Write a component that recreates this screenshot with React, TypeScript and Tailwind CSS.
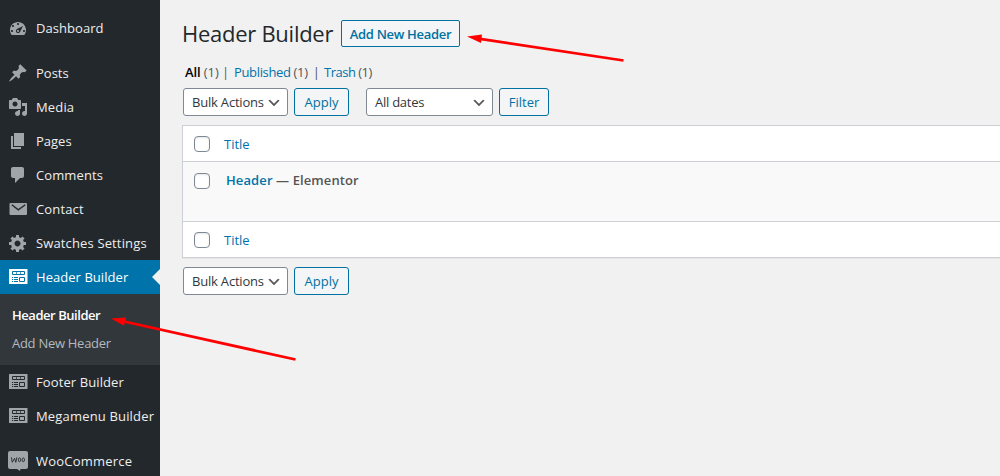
import React from "react";

type IconName = "dashboard" | "post" | "media" | "page" | "comment" | "email" | "gear" | "layout" | "woo";

const paths: Partial<Record<IconName, string>> = {
  dashboard:
    "M3.76 17h12.48c1.1-1.37 1.76-3.11 1.76-5 0-4.42-3.58-8-8-8s-8 3.58-8 8c0 1.89.66 3.63 1.76 5zM9 6c0-.55.45-1 1-1s1 .45 1 1c0 .56-.45 1-1 1s-1-.44-1-1zM4 8c0-.55.45-1 1-1s1 .45 1 1c0 .56-.45 1-1 1s-1-.44-1-1zm4.52 3.4c.84-.83 6.51-3.5 6.51-3.5s-2.66 5.68-3.49 6.51c-.84.84-2.18.84-3.02 0-.83-.83-.83-2.18 0-3.01zM3 13c0-.55.45-1 1-1s1 .45 1 1c0 .56-.45 1-1 1s-1-.44-1-1zm6 0c0 .55.45 1 1 1s1-.45 1-1c0-.56-.45-1-1-1s-1 .44-1 1zm6 0c0-.55.45-1 1-1s1 .45 1 1c0 .56-.45 1-1 1s-1-.44-1-1z",
  post: "M10.44 3.02l1.82-1.82 6.36 6.35-1.83 1.82c-1.05-.68-2.48-.57-3.41.36l-.75.75c-.92.93-1.04 2.35-.35 3.41l-1.83 1.82-2.41-2.41-2.8 2.79c-.42.42-3.38 2.71-3.8 2.29s1.86-3.39 2.28-3.81l2.79-2.79L4.1 9.36l1.83-1.82c1.05.69 2.48.57 3.4-.36l.75-.75c.93-.92 1.05-2.35.36-3.41z",
  media:
    "M13 11V4c0-.55-.45-1-1-1h-1.67L9 1H5L3.67 3H2c-.55 0-1 .45-1 1v7c0 .55.45 1 1 1h10c.55 0 1-.45 1-1zM7 4.5c1.38 0 2.5 1.12 2.5 2.5S8.38 9.5 7 9.5 4.5 8.38 4.5 7 5.62 4.5 7 4.5zM14 6h5v10.5c0 1.38-1.12 2.5-2.5 2.5S14 17.88 14 16.5s1.12-2.5 2.5-2.5c.17 0 .34.02.5.05V9h-3V6zm-4 8.05V13h2v3.5c0 1.38-1.12 2.5-2.5 2.5S7 17.88 7 16.5 8.12 14 9.5 14c.17 0 .34.02.5.05z",
  page: "M6 15V2h10v13H6zm-1 1h8v2H3V5h2v11z",
  comment: "M5 2h9c1.1 0 2 .9 2 2v7c0 1.1-.9 2-2 2h-2l-5 5v-5H5c-1.1 0-2-.9-2-2V4c0-1.1.9-2 2-2z",
  gear: "M18 12h-2.18c-.17.7-.44 1.35-.81 1.93l1.54 1.54-2.1 2.1-1.54-1.54c-.58.36-1.23.63-1.91.79V19H8v-2.18c-.68-.16-1.33-.43-1.91-.79l-1.54 1.54-2.12-2.12 1.54-1.54c-.36-.58-.63-1.23-.79-1.91H1V9.03h2.17c.16-.7.44-1.35.8-1.94L2.43 5.55l2.1-2.1 1.54 1.54c.58-.37 1.24-.64 1.93-.81V2h3v2.18c.68.16 1.33.43 1.91.79l1.54-1.54 2.12 2.12-1.54 1.54c.36.59.64 1.24.8 1.94H18V12zm-8.5 1.5c1.66 0 3-1.34 3-3s-1.34-3-3-3-3 1.34-3 3 1.34 3 3 3z",
};

function Icon({ name, ink }: { name: IconName; ink: string }) {
  if (name === "layout")
    return (
      <svg viewBox="0 0 20 20" className="size-5 shrink-0" fill="none">
        <rect x="1" y="2" width="18.5" height="15" rx="0.5" fill="currentColor" />
        <path d="M4.5 4.5h12v3h-12zM11.5 10.5h5v4h-5z" stroke={ink} />
        <path d="M8.5 4.5v3M12.5 4.5v3" stroke={ink} strokeWidth="0.7" />
        <path d="M4 10.5h1.2M6 10.5h4M4 12.5h1.2M6 12.5h4M4 14.5h1.2M6 14.5h4" stroke={ink} />
      </svg>
    );
  if (name === "woo")
    return (
      <svg viewBox="0 0 20 20" className="size-5 shrink-0" fill="none">
        <path fill="currentColor" d="M2 0h16q2 0 2 2v14q0 2-2 2h-5.5l-.5 2-3-2H2q-2 0-2-2V2q0-2 2-2z" />
        <path stroke={ink} strokeWidth="0.9" d="M3.4 6.3l.9 5 2.2-4 1.3 4 1.1-5" />
        <ellipse cx="11.5" cy="8.8" rx="1.2" ry="1.9" stroke={ink} strokeWidth="0.9" />
        <ellipse cx="15.3" cy="8.8" rx="1.2" ry="1.9" stroke={ink} strokeWidth="0.9" />
      </svg>
    );
  if (name === "email")
    return (
      <svg viewBox="0 0 20 20" className="size-5 shrink-0" fill="none">
        <rect x="1.5" y="4" width="17.5" height="12" rx="1" fill="currentColor" />
        <path d="M3.8 5.8l6.5 5 7-5" stroke={ink} strokeWidth="1.4" />
      </svg>
    );
  return (
    <svg viewBox="0 0 20 20" className="size-5 shrink-0" fill="currentColor">
      <path d={paths[name]} />
    </svg>
  );
}

function MenuItem({ icon, label, tracking = "", active = false }: { icon: IconName; label: string; tracking?: string; active?: boolean }) {
  return (
    <a className={`relative flex h-[34px] shrink-0 items-center gap-2 pl-2 ${active ? "bg-[#0073aa] text-white" : "text-[#a0a5aa]"}`}>
      <Icon name={icon} ink={active ? "#0073aa" : "#23282d"} />
      <span className={`whitespace-nowrap text-[13px] leading-[18px] ${active ? "text-white" : "text-[#eeeeee]"} ${tracking}`}>{label}</span>
      {active && (
        <svg className="absolute right-0 top-[9px] h-4 w-2" viewBox="0 0 8 16">
          <path d="M8 0v16L0 8z" fill="#f1f1f1" />
        </svg>
      )}
    </a>
  );
}

function Select({ label, className, tracking }: { label: string; className: string; tracking: string }) {
  return (
    <div className={`flex h-7 items-center justify-between rounded-[3px] border border-[#7e8993] bg-white pl-2 pr-[5px] text-[13px] text-[#32373c] ${className}`}>
      <span className={`whitespace-nowrap pt-[2px] ${tracking}`}>{label}</span>
      <svg className="mt-px size-4 shrink-0" viewBox="0 0 20 20">
        <path d="M5 6l5 5 5-5 2 1-7 7-7-7 2-1z" fill="#555" />
      </svg>
    </div>
  );
}

function Button({ label, className }: { label: string; className: string }) {
  return (
    <button className={`h-7 whitespace-nowrap rounded-[3px] border border-[#0071a1] bg-[#f3f5f6] pt-px text-[13px] text-[#0071a1] ${className}`}>{label}</button>
  );
}

function Checkbox() {
  return <span className="size-4 shrink-0 rounded-[4px] border border-[#7e8993] bg-white shadow-[inset_0_1px_2px_rgba(0,0,0,0.1)]" />;
}

function ColumnTitle() {
  return (
    <div className="flex h-[35px] items-center pl-[11px]">
      <Checkbox />
      <span className="ml-[14px] pt-[2px] text-[#0073aa]">Title</span>
    </div>
  );
}

export default function App() {
  return (
    <div className="relative flex h-[476px] w-[1000px] overflow-hidden bg-[#f1f1f1] font-['Open_Sans',sans-serif] text-[13px] text-[#555]">
      <nav className="flex w-40 shrink-0 flex-col bg-[#23282d] pt-[11px]">
        <MenuItem icon="dashboard" label="Dashboard" tracking="tracking-[0.05px]" />
        <div className="h-[11px] shrink-0" />
        <MenuItem icon="post" label="Posts" />
        <MenuItem icon="media" label="Media" tracking="tracking-[0.15px]" />
        <MenuItem icon="page" label="Pages" />
        <MenuItem icon="comment" label="Comments" tracking="tracking-[0.1px]" />
        <MenuItem icon="email" label="Contact" tracking="tracking-[0.15px]" />
        <MenuItem icon="gear" label="Swatches Settings" tracking="tracking-[0.14px]" />
        <MenuItem icon="layout" label="Header Builder" tracking="tracking-[0.05px]" active />
        <div className="flex h-[71px] shrink-0 flex-col bg-[#32373c] pl-3 pt-2">
          <span className="flex h-7 items-center font-semibold tracking-[-0.46px] text-white">Header Builder</span>
          <span className="flex h-7 items-center tracking-[-0.28px] text-[#b4b9be]">Add New Header</span>
        </div>
        <MenuItem icon="layout" label="Footer Builder" tracking="tracking-[0.1px]" />
        <MenuItem icon="layout" label="Megamenu Builder" tracking="tracking-[0.17px]" />
        <div className="h-[11px] shrink-0" />
        <MenuItem icon="woo" label="WooCommerce" tracking="tracking-[0.22px]" />
      </nav>

      <main className="flex min-w-0 flex-1 flex-col pl-[22px] pt-5">
        <div className="flex h-7 items-start">
          <h1 className="-mt-px w-[159px] whitespace-nowrap text-[22px] leading-7 tracking-[-0.27px] text-[#23282d]">Header Builder</h1>
          <a className="flex h-[27px] w-[119px] items-center justify-center whitespace-nowrap rounded-[2px] border border-[#0071a1] bg-[#f3f5f6] pt-[2px] font-semibold tracking-[-0.3px] text-[#0071a1]">Add New Header</a>
        </div>
        <div className="mt-[15px] flex h-5 items-center pl-[3px]">
          <span className="w-[49px] whitespace-nowrap tracking-[-0.1px]"><b className="font-semibold text-black">All</b> (1) <span>|</span></span>
          <span className="w-[90px] whitespace-nowrap tracking-[-0.35px]"><a className="text-[#0073aa]">Published</a> (1) <span className="ml-[2px]">|</span></span>
          <span className="whitespace-nowrap tracking-[-0.5px]"><a className="text-[#0073aa]">Trash</a> (1)</span>
        </div>
        <div className="mt-[5px] flex pl-px">
          <Select label="Bulk Actions" tracking="tracking-[-0.2px]" className="w-[105px]" />
          <Button label="Apply" className="ml-[6px] w-[55px]" />
          <Select label="All dates" tracking="tracking-[-0.25px]" className="ml-[17px] w-[127px]" />
          <Button label="Filter" className="ml-[6px] w-[50px]" />
        </div>
        <section className="mt-[9px] h-[133px] border border-r-0 border-[#ccd0d4] bg-white shadow-[0_1px_1px_rgba(0,0,0,0.04)]">
          <ColumnTitle />
          <div className="flex h-[61px] items-start border-y border-[#ccd0d4] bg-[#f9f9f9] pl-[11px] pt-[11px]">
            <Checkbox />
            <strong className="-mt-[3px] ml-4 whitespace-nowrap font-semibold leading-5 tracking-[0.1px]"><a className="text-[#0073aa]">Header</a> — Elementor</strong>
          </div>
          <ColumnTitle />
        </section>
        <div className="mt-[9px] flex pl-px">
          <Select label="Bulk Actions" tracking="tracking-[-0.2px]" className="w-[105px]" />
          <Button label="Apply" className="ml-[6px] w-[55px]" />
        </div>
      </main>

      <svg className="pointer-events-none absolute inset-0" width="1000" height="476" fill="#f00" stroke="#f00">
        <path d="M480 38.8L623.5 60.5M124 321.5L295.5 359.5" strokeWidth="2.7" />
        <path d="M467 36.5L482 34.5L481 43ZM111 318.5L126 317.5L124 325.8Z" stroke="none" />
      </svg>
    </div>
  );
}
